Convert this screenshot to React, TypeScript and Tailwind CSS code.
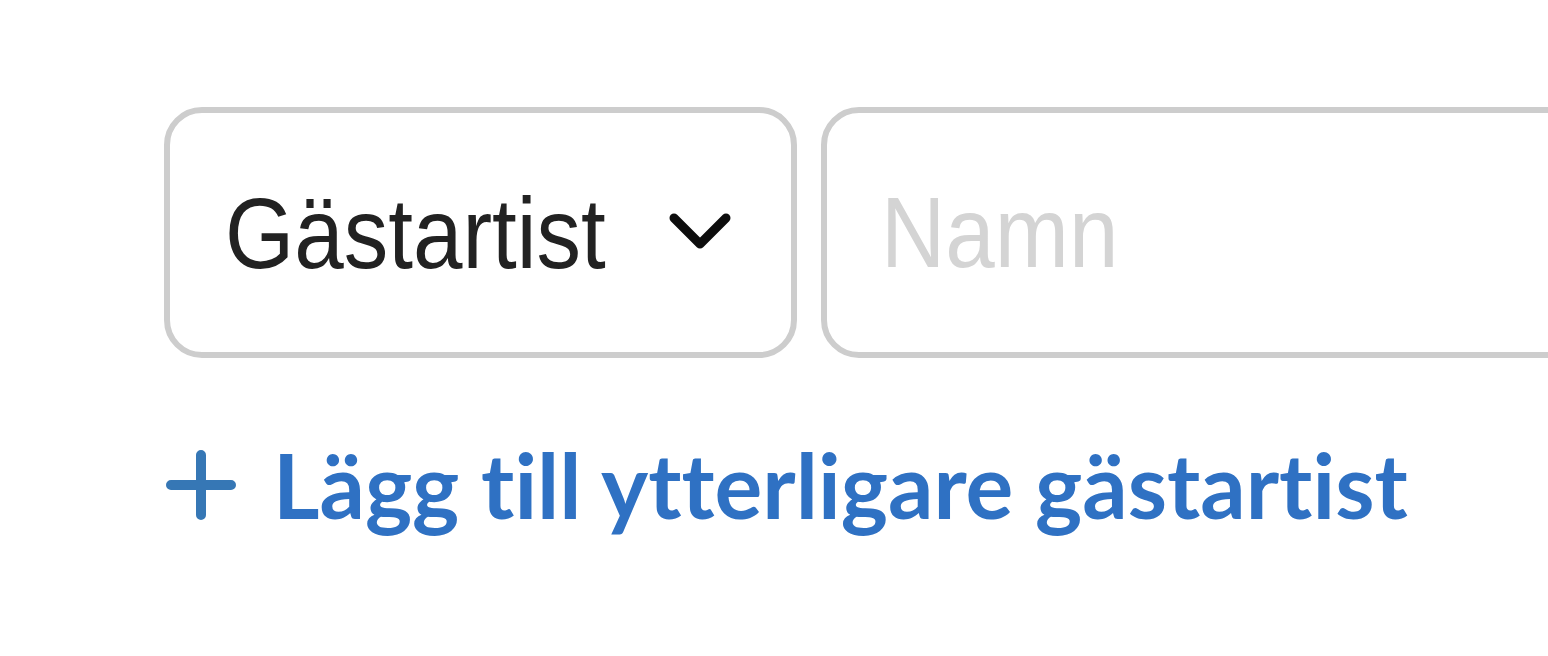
import { useState } from "react";

function Chevron() {
  return (
    <svg width="62" height="40" viewBox="0 0 62 40" fill="none" className="shrink-0">
      <path
        d="M5 5L31 31L57 5"
        stroke="#0d0d0d"
        strokeWidth="9"
        strokeLinecap="round"
        strokeLinejoin="round"
      />
    </svg>
  );
}

function Plus() {
  return (
    <svg width="70" height="70" viewBox="0 0 70 70" fill="none" className="shrink-0 ml-[2px]">
      <path d="M35 5V65M5 35H65" stroke="#3677b5" strokeWidth="10" strokeLinecap="round" />
    </svg>
  );
}

const sans = '"Liberation Sans", Arial, sans-serif';

export default function App() {
  const [name, setName] = useState("");

  return (
    <div className="w-[1548px] h-[656px] overflow-hidden bg-white pt-[107px] pl-[164px]">
      <div className="flex gap-[24px]">
        <div className="flex items-center justify-between w-[633px] h-[251px] shrink-0 rounded-[38px] border-[6px] border-[#cdcdcd] pl-[55px] pr-[60px]">
          <span
            className="inline-block origin-left scale-x-[0.89] text-[100px] text-[#222222] leading-none"
            style={{ fontFamily: sans }}
          >
            Gästartist
          </span>
          <Chevron />
        </div>
        <div className="flex items-center w-[900px] h-[251px] shrink-0 rounded-[38px] border-[6px] border-[#cdcdcd] pl-[54px]">
          <input
            value={name}
            onChange={(e) => setName(e.target.value)}
            placeholder="Namn"
            className="w-[110%] shrink-0 origin-left scale-x-[0.89] outline-none bg-transparent text-[100px] text-[#222222] placeholder:text-[#d4d4d4] leading-none"
            style={{ fontFamily: sans }}
          />
        </div>
      </div>
      <button className="flex items-center gap-[37px] mt-[82px] text-[#2f71c3]">
        <Plus />
        <span
          className="text-[89.5px] font-bold leading-none [font-variant-ligatures:none]"
          style={{ fontFamily: "Lato, sans-serif" }}
        >
          Lägg till ytterligare gästartist
        </span>
      </button>
    </div>
  );
}
